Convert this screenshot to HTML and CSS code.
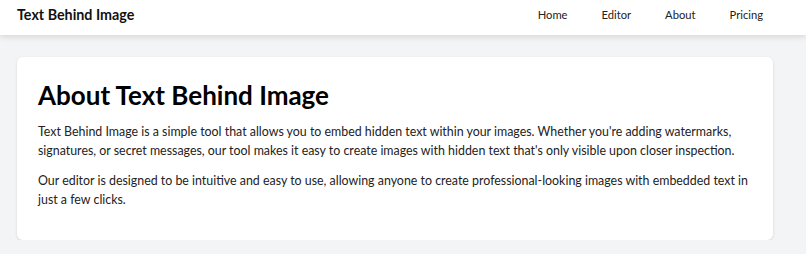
FILE: index.html
```html
<!DOCTYPE html>
<html lang="en">

<head>
    <meta charset="UTF-8">
    <title>Text Behind Image</title>
    <link rel="stylesheet" href="styles.css">
</head>

<body>
    <nav class="navbar">
        <div class="brand">Text Behind Image</div>
        <div class="nav-links">
            <a href="#">Home</a>
            <a href="#">Editor</a>
            <a href="#">About</a>
            <a href="#">Pricing</a>
        </div>
    </nav>

    <main class="content">
        <section class="card">
            <h1>About Text Behind Image</h1>
            <p>Text Behind Image is a simple tool that allows you to embed hidden text within your images. Whether you're adding watermarks, signatures, or secret messages, our tool makes it easy to create images with hidden text that's only visible upon closer inspection.</p>
            <p>Our editor is designed to be intuitive and easy to use, allowing anyone to create professional-looking images with embedded text in just a few clicks.</p>
        </section>
    </main>
</body>

</html>
```

FILE: styles.css
```css
* {
    box-sizing: border-box;
}

body {
    margin: 0;
    background-color: #F3F4F6;
    font-family: Lato, "Noto Sans", sans-serif;
    color: #1F2937;
}

.navbar {
    display: flex;
    justify-content: space-between;
    align-items: center;
    height: 35px;
    padding: 0 17px 6px;
    background-color: #FFFFFF;
    box-shadow: 0 2px 6px rgba(0, 0, 0, 0.12);
}

.brand {
    font-size: 14.3px;
    font-weight: bold;
    color: #111111;
}

.nav-links {
    display: flex;
    gap: 34px;
    padding-right: 26px;
}

.nav-links a {
    font-size: 11.2px;
    color: #222222;
    text-decoration: none;
}

.content {
    padding: 22px 33px 0 17px;
}

.card {
    padding: 22px 21px 31px;
    background-color: #FFFFFF;
    border-radius: 6px;
    box-shadow: 0 1px 3px rgba(0, 0, 0, 0.12);
}

h1 {
    margin: 0 0 12px;
    font-size: 26px;
    line-height: 32px;
    font-weight: bold;
    color: #000000;
}

p {
    margin: 0 0 12px;
    font-size: 12.4px;
    line-height: 18.5px;
    color: #222222;
}

p:last-child {
    margin-bottom: 0;
}
```
